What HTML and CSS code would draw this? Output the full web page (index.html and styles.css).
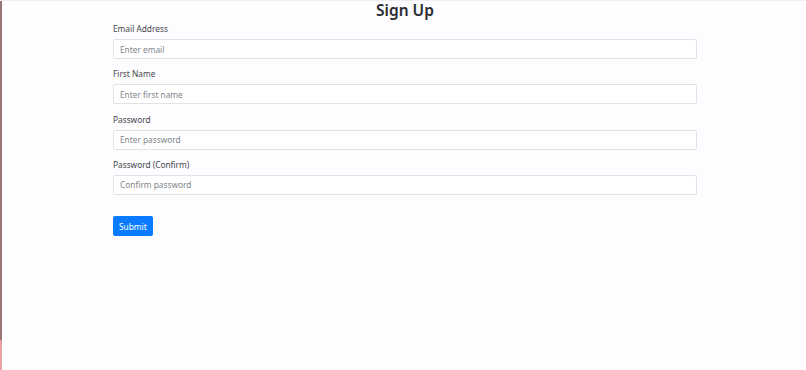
FILE: index.html
```html
<!DOCTYPE html>
<html lang="en">

<head>
    <meta charset="UTF-8">
    <meta name="viewport" content="width=device-width, initial-scale=1.0">
    <title>Sign Up</title>
    <link rel="stylesheet" href="styles.css">
</head>

<body>
    <div class="container">
        <h3 class="title">Sign Up</h3>
        <form method="POST">
            <div class="form-group">
                <label for="email">Email Address</label>
                <input type="email" class="form-control" id="email" name="email" placeholder="Enter email">
            </div>
            <div class="form-group">
                <label for="firstName">First Name</label>
                <input type="text" class="form-control" id="firstName" name="firstName" placeholder="Enter first name">
            </div>
            <div class="form-group">
                <label for="password1">Password</label>
                <input type="password" class="form-control" id="password1" name="password1" placeholder="Enter password">
            </div>
            <div class="form-group">
                <label for="password2">Password (Confirm)</label>
                <input type="password" class="form-control" id="password2" name="password2" placeholder="Confirm password">
            </div>
            <button type="submit" class="btn btn-primary">Submit</button>
        </form>
    </div>
</body>

</html>
```

FILE: styles.css
```css
* {
    margin: 0;
    padding: 0;
    box-sizing: border-box;
}

html,
body {
    height: 100%;
}

body {
    font-family: 'Noto Sans', 'Open Sans', sans-serif;
    background: linear-gradient(to bottom, #9a7474 92%, #e7a3a3 92%) left top / 2px 100% no-repeat, #fdfcfe;
    color: #3a3d42;
    padding-left: 4px;
    border-top: 1px solid #efeff1;
}

.container {
    width: 584px;
    margin: 0 auto;
}

.title {
    font-size: 15.5px;
    font-weight: 600;
    line-height: 19px;
    text-align: center;
    color: #2a2d31;
}

form {
    margin-top: 3px;
}

.form-group {
    margin-bottom: 9.33px;
}

.form-group label {
    display: block;
    font-size: 8.3px;
    line-height: 12px;
    margin-bottom: 4px;
    color: #45484d;
}

.form-control {
    display: block;
    width: 100%;
    height: 20px;
    padding: 0 6px;
    font-family: inherit;
    font-size: 8.3px;
    color: #495057;
    background: #fff;
    border: 1px solid #e0e2e5;
    border-radius: 2px;
}

.form-control::placeholder {
    color: #80868d;
}

.btn {
    margin-top: 12px;
    height: 20px;
    padding: 0 6px;
    border: none;
    border-radius: 2px;
    font-family: inherit;
    font-size: 8.3px;
    cursor: pointer;
}

.btn-primary {
    background: #0a7bff;
    color: #fff;
}
```
